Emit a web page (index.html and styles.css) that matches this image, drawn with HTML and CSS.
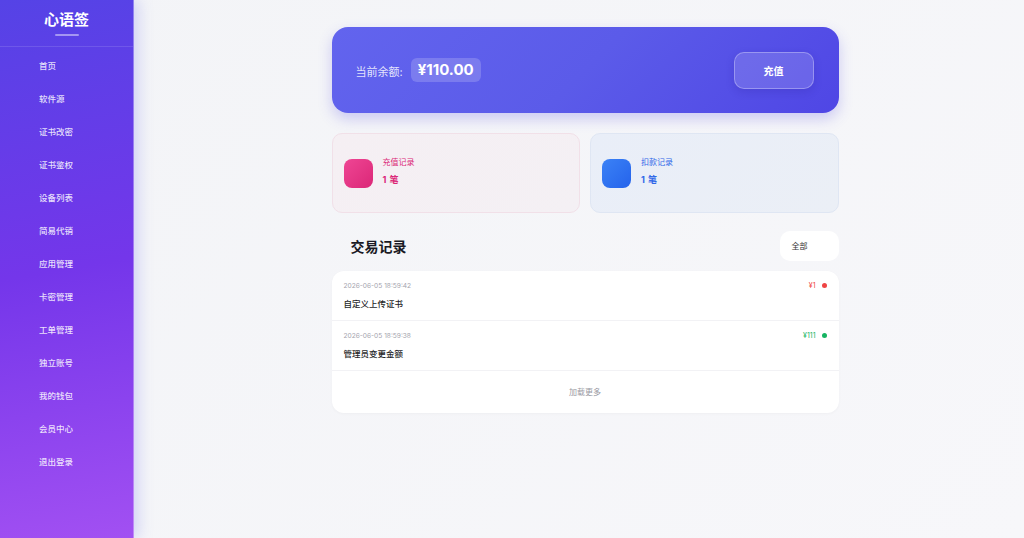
FILE: index.html
```html
<!DOCTYPE html>
<html lang="zh">
<head>
  <meta charset="UTF-8">
  <meta name="viewport" content="width=device-width, initial-scale=1.0">
  <title>我的钱包 - 心语签</title>
  <link rel="stylesheet" href="styles.css">
</head>
<body>
  <aside class="sidebar">
    <div class="brand">
      <h1>心语签</h1>
      <span class="brand-line"></span>
    </div>
    <nav class="menu">
      <a href="#">首页</a>
      <a href="#">软件源</a>
      <a href="#">证书改密</a>
      <a href="#">证书鉴权</a>
      <a href="#">设备列表</a>
      <a href="#">简易代销</a>
      <a href="#">应用管理</a>
      <a href="#">卡密管理</a>
      <a href="#">工单管理</a>
      <a href="#">独立账号</a>
      <a href="#">我的钱包</a>
      <a href="#">会员中心</a>
      <a href="#">退出登录</a>
    </nav>
  </aside>

  <main class="main">
    <div class="wallet">
      <!-- 余额 -->
      <section class="balance">
        <div class="balance-info">
          <span class="balance-label">当前余额:</span>
          <span class="balance-value">¥110.00</span>
        </div>
        <button class="recharge-btn">充值</button>
      </section>

      <!-- 统计 -->
      <section class="stats">
        <div class="stat stat-pink">
          <div class="stat-icon"></div>
          <div class="stat-text">
            <div class="stat-title">充值记录</div>
            <div class="stat-count">1 笔</div>
          </div>
        </div>
        <div class="stat stat-blue">
          <div class="stat-icon"></div>
          <div class="stat-text">
            <div class="stat-title">扣款记录</div>
            <div class="stat-count">1 笔</div>
          </div>
        </div>
      </section>

      <!-- 交易记录 -->
      <div class="records-head">
        <h2>交易记录</h2>
        <div class="filter">全部</div>
      </div>

      <section class="records">
        <div class="record">
          <div class="record-top">
            <span class="record-time">2026-06-05 18:59:42</span>
            <span class="record-amount minus">¥1 <i class="dot"></i></span>
          </div>
          <div class="record-title">自定义上传证书</div>
        </div>
        <div class="record">
          <div class="record-top">
            <span class="record-time">2026-06-05 18:59:38</span>
            <span class="record-amount plus">¥111 <i class="dot"></i></span>
          </div>
          <div class="record-title">管理员变更金额</div>
        </div>
        <div class="load-more">加载更多</div>
      </section>
    </div>
  </main>
</body>
</html>
```

FILE: styles.css
```css
* {
  box-sizing: border-box;
}
body {
  margin: 0;
  font-family: Inter, "Noto Sans CJK SC", sans-serif;
  background: linear-gradient(135deg, #f3f4f7, #f7f7fa);
  display: flex;
  height: 100vh;
  overflow: hidden;
}
.sidebar {
  width: 134px;
  flex-shrink: 0;
  background: linear-gradient(170deg, #5543e6 0%, #7436ea 50%, #a250f2 100%);
  border-right: 1px solid rgba(255, 255, 255, 0.35);
  box-shadow: 4px 0 14px rgba(99, 102, 241, 0.25);
  position: relative;
  z-index: 1;
}
.brand {
  height: 47px;
  border-bottom: 1px solid rgba(255, 255, 255, 0.12);
  display: flex;
  flex-direction: column;
  align-items: center;
  padding-top: 10px;
}
.brand h1 {
  margin: 0;
  color: #fff;
  font-size: 15px;
  font-weight: 700;
  line-height: 20px;
}
.brand-line {
  width: 24px;
  height: 2px;
  margin-top: 4px;
  background: rgba(255, 255, 255, 0.45);
  border-radius: 1px;
}
.menu {
  display: flex;
  flex-direction: column;
  padding-top: 12px;
}
.menu a {
  display: block;
  height: 33px;
  line-height: 14px;
  padding: 0 0 0 39px;
  color: rgba(255, 255, 255, 0.85);
  font-size: 8.5px;
  font-weight: 500;
  text-decoration: none;
}
.main {
  flex: 1;
  display: flex;
  justify-content: center;
  padding: 27px 0 0 12px;
}
.wallet {
  width: 507px;
}
.balance {
  height: 86px;
  border-radius: 16px;
  background: linear-gradient(135deg, #6264ee, #5b5be9 50%, #4f46e5);
  box-shadow: 0 6px 14px rgba(79, 70, 229, 0.25);
  display: flex;
  align-items: center;
  justify-content: space-between;
  padding: 0 24px 0 24px;
}
.balance-info {
  display: flex;
  align-items: center;
  gap: 8px;
}
.balance-label {
  color: rgba(255, 255, 255, 0.85);
  font-size: 11px;
  margin-top: 2px;
}
.balance-value {
  background: rgba(255, 255, 255, 0.18);
  color: #fff;
  font-size: 15px;
  font-weight: 700;
  padding: 3px 7px;
  border-radius: 6px;
  line-height: 18px;
}
.recharge-btn {
  width: 80px;
  height: 37px;
  margin-right: 1px;
  border-radius: 10px;
  border: 1px solid rgba(255, 255, 255, 0.3);
  background: rgba(255, 255, 255, 0.15);
  color: #fff;
  font-family: inherit;
  font-size: 10px;
  font-weight: 700;
  box-shadow: 0 3px 8px rgba(40, 30, 150, 0.2);
  cursor: pointer;
}
.stats {
  display: grid;
  grid-template-columns: 1fr 1fr;
  gap: 10px;
  margin-top: 20px;
}
.stat {
  height: 80px;
  border-radius: 10px;
  display: flex;
  align-items: center;
  padding: 0 11px;
  gap: 10px;
}
.stat-pink {
  background: linear-gradient(135deg, #f5eff3, #f4f0f4);
  border: 1px solid #f1e0e8;
}
.stat-blue {
  background: linear-gradient(135deg, #e9eef8, #ebeff6);
  border: 1px solid #dfe6f3;
}
.stat-icon {
  width: 29px;
  height: 29px;
  border-radius: 8px;
}
.stat-pink .stat-icon {
  background: linear-gradient(135deg, #ef4694, #db2777);
}
.stat-blue .stat-icon {
  background: linear-gradient(135deg, #3b82f6, #2563eb);
}
.stat-title {
  font-size: 8px;
  line-height: 10px;
  margin-top: -3px;
}
.stat-count {
  font-size: 9px;
  font-weight: 700;
  margin-top: 6px;
  word-spacing: 1px;
}
.stat-pink .stat-title,
.stat-pink .stat-count {
  color: #db2777;
}
.stat-blue .stat-title,
.stat-blue .stat-count {
  color: #2f66e8;
}
.records-head {
  display: flex;
  justify-content: space-between;
  align-items: center;
  margin-top: 18px;
  padding-left: 19px;
}
.records-head h2 {
  margin: 0;
  font-size: 14px;
  font-weight: 700;
  color: #1a1a24;
}
.filter {
  width: 59px;
  height: 30px;
  background: #fff;
  border-radius: 10px;
  font-size: 8px;
  color: #333;
  line-height: 30px;
  padding-left: 12px;
}
.records {
  margin-top: 10px;
  background: #fff;
  border-radius: 12px;
  box-shadow: 0 1px 3px rgba(0, 0, 0, 0.03);
}
.record {
  height: 50px;
  border-bottom: 1px solid #f2f2f5;
  padding: 10px 12px 0 12px;
}
.record-top {
  display: flex;
  justify-content: space-between;
  align-items: center;
}
.record-time {
  font-size: 6.6px;
  color: #a3a3ad;
}
.record-amount {
  font-size: 7px;
  display: flex;
  align-items: center;
  gap: 6px;
}
.record-amount.minus {
  color: #ef4444;
}
.record-amount.plus {
  color: #16b462;
}
.dot {
  width: 5px;
  height: 5px;
  border-radius: 50%;
  background: currentColor;
}
.record-title {
  margin-top: 7px;
  font-size: 8.5px;
  font-weight: 500;
  color: #1f1f28;
}
.load-more {
  height: 42px;
  line-height: 42px;
  text-align: center;
  font-size: 8px;
  color: #9a9aa3;
}
```
